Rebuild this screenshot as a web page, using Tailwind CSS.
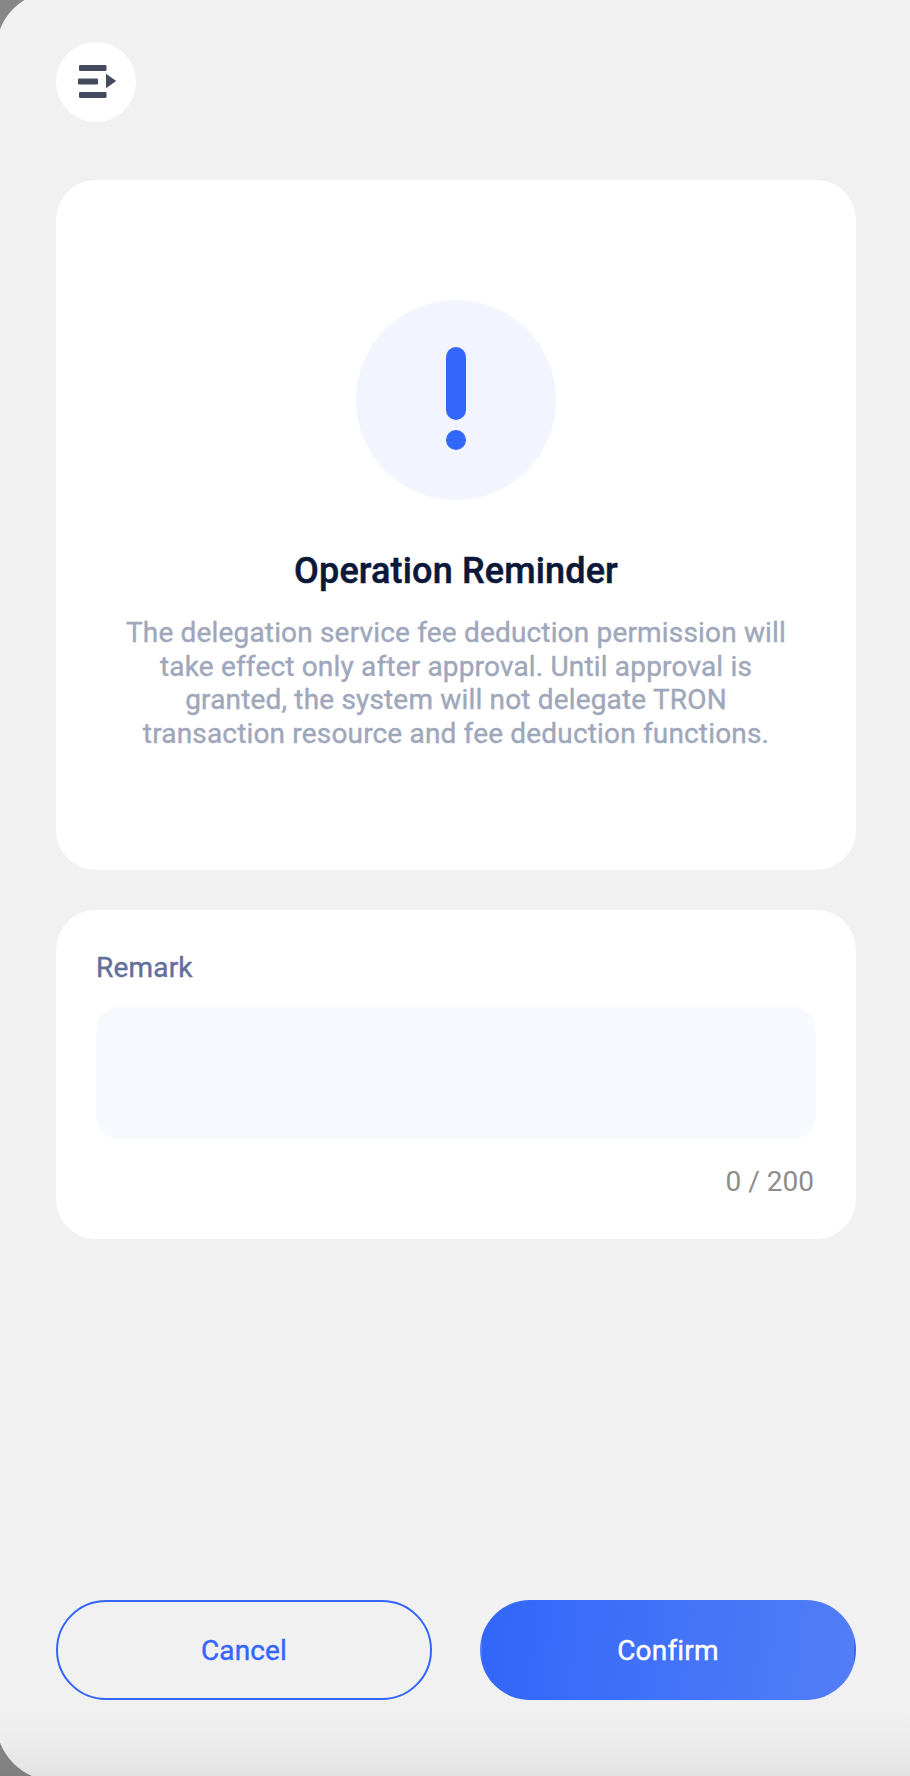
<!DOCTYPE html>
<html lang="en">
<head>
<meta charset="utf-8">
<title>Operation Reminder</title>
<script src="https://cdn.jsdelivr.net/npm/@tailwindcss/browser@4"></script>
</head>
<body class="bg-[#878787] font-['Roboto',sans-serif] overflow-hidden">
<div class="relative w-[910px] h-[1776px] overflow-hidden">
  <main class="-ml-1 -mt-[9px] w-[974px] h-[1790px] rounded-[60px] bg-[#f1f1f1] pl-[60px] pt-[51px] flex flex-col">
    <button class="size-20 shrink-0 rounded-full bg-white flex items-center justify-center" aria-label="Menu">
      <svg class="size-20" viewBox="0 0 80 80" fill="#444b5c">
        <rect x="23" y="23" width="27.500" height="6" rx="1.200"/>
        <rect x="22" y="36.500" width="20" height="6" rx="1.200"/>
        <rect x="23" y="50" width="27.500" height="6" rx="1.200"/>
        <path d="M50 31.800v14.400l10.200-7.200z"/>
      </svg>
    </button>
    <section class="mt-[58px] w-[800px] h-[690px] shrink-0 rounded-[40px] bg-white flex flex-col items-center pt-[120px]">
      <div class="size-[200px] rounded-full bg-[#f2f5ff] flex flex-col items-center pt-[47px] gap-[10px]">
        <div class="w-5 h-[73px] rounded-full bg-[#3366fa]"></div>
        <div class="size-5 rounded-full bg-[#3366fa]"></div>
      </div>
      <h1 class="mt-[50px] text-[36px] leading-[43px] font-medium tracking-[0.15px] [-webkit-text-stroke:0.5px] text-[#0c1839]">Operation Reminder</h1>
      <p class="mt-[23px] text-[28px] leading-[33.6px] font-normal tracking-[0.17px] [-webkit-text-stroke:0.4px] text-center text-[#9fa7bb]">The delegation service fee deduction permission will<br>take effect only after approval. Until approval is<br>granted, the system will not delegate TRON<br>transaction resource and fee deduction functions.</p>
    </section>
    <section class="mt-10 w-[800px] h-[329px] shrink-0 rounded-[40px] bg-white px-10 pt-[41px] flex flex-col">
      <label class="text-[28px] leading-[34px] font-normal tracking-[0.2px] [-webkit-text-stroke:0.4px] text-[#616f99]">Remark</label>
      <div class="mt-[22px] h-[132px] rounded-3xl bg-[#f6faff]"></div>
      <div class="mt-[26px] pr-[2px] text-right text-[28px] leading-[34px] text-[#8d8d8d]">0 / 200</div>
    </section>
    <div class="mt-[361px] flex gap-12">
      <button class="w-[376px] h-[100px] rounded-full border-2 border-[#3366ff] pt-[2px] text-[28px] font-normal tracking-[0.15px] [-webkit-text-stroke:0.4px] text-[#3366ff]">Cancel</button>
      <button class="w-[376px] h-[100px] rounded-full border-2 border-transparent pt-[2px] bg-[linear-gradient(98deg,#3166f9,#537ef7)] text-[28px] font-normal tracking-[0.2px] [-webkit-text-stroke:0.4px] text-white">Confirm</button>
    </div>
  </main>
  <div class="absolute inset-x-0 bottom-0 h-[70px] bg-linear-to-b from-black/0 via-black/2 to-black/6"></div>
</div>
</body>
</html>
